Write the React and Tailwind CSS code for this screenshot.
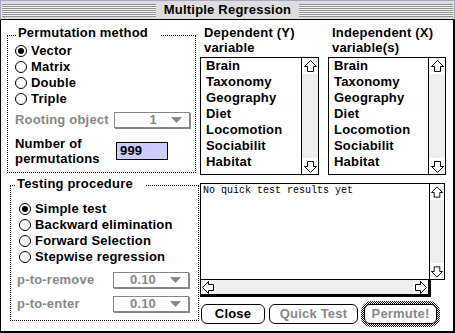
const ITEMS = ["Brain", "Taxonomy", "Geography", "Diet", "Locomotion", "Sociabilit", "Habitat"];

function Radio({ label, checked }) {
  return (
    <div className="flex items-center h-[16px] gap-[4px]">
      <span className="w-[12px] h-[12px] rounded-full border border-black bg-white flex items-center justify-center">
        {checked && <span className="w-[6px] h-[6px] rounded-full bg-black" />}
      </span>
      <span>{label}</span>
    </div>
  );
}

function Popup({ value }) {
  return (
    <div className="w-[76px] h-[16px] border border-[#888] shadow-[1px_1px_0_#888] bg-white flex items-center justify-end pr-[7px] text-[#888]">
      <span>{value}</span>
      <svg width="11" height="6" className="ml-[14px]">
        <polygon points="0,0 11,0 5.5,6" fill="#888" />
      </svg>
    </div>
  );
}

function Arrow({ dir }) {
  const rot = { up: 0, down: 180, left: 270, right: 90 }[dir];
  return (
    <svg width="15" height="15" viewBox="0 0 15 15" style={{ transform: `rotate(${rot}deg)` }}>
      <polygon
        points="7.5,1.5 13.5,7.5 10.5,7.5 10.5,12.5 4.5,12.5 4.5,7.5 1.5,7.5"
        fill="white"
        stroke="black"
        strokeWidth="1"
      />
    </svg>
  );
}

function VScroll({ width }) {
  return (
    <div className={`${width} border-l border-black bg-[#eeeeee] flex flex-col`}>
      <div className="h-[16px] bg-white flex items-center justify-center">
        <Arrow dir="up" />
      </div>
      <div className="flex-1" />
      <div className="h-[16px] bg-white flex items-center justify-center">
        <Arrow dir="down" />
      </div>
    </div>
  );
}

function ListBox({ width }) {
  return (
    <div className={`${width} h-[118px] border border-black flex`}>
      <div className="flex-1 pl-[5px] leading-[16px]">
        {ITEMS.map((it) => (
          <div key={it}>{it}</div>
        ))}
      </div>
      <VScroll width="w-[17px]" />
    </div>
  );
}

function Button({ children, disabled, width }) {
  return (
    <div
      className={`${width} h-[20px] rounded-[6px] border border-black bg-white flex items-center justify-center ${
        disabled ? "text-[#888]" : "text-black"
      }`}
    >
      {children}
    </div>
  );
}

function Stripes() {
  return (
    <div className="flex-1 h-[13px] bg-[repeating-linear-gradient(to_bottom,#909090_0px,#909090_1px,#f4f4f4_1px,#f4f4f4_2px)]" />
  );
}

export default function App() {
  return (
    <div
      className="w-[455px] h-[333px] bg-white flex flex-col text-[13px] font-bold text-black tracking-[0.2px]"
      style={{ fontFamily: '"Liberation Sans", Arial, sans-serif' }}
    >
      <div className="h-[20px] bg-[#dddddd] border-t border-x border-[#a8a8c0] border-b border-b-black flex items-center px-[1px]">
        <Stripes />
        <span className="px-[8px] leading-[16px]">Multiple Regression</span>
        <Stripes />
      </div>

      <div className="flex-1 flex border-l border-r-2 border-b-2 border-black">
        <div className="w-[199px] flex flex-col">
          <div className="relative ml-[6px] mt-[15px] w-[189px] h-[138px] border border-dotted border-black pl-[7px] pt-[7px] leading-[16px]">
            <span className="absolute left-[8px] top-[-11px] bg-white pl-[2px] pr-[12px]">Permutation method</span>
            <Radio label="Vector" checked />
            <Radio label="Matrix" />
            <Radio label="Double" />
            <Radio label="Triple" />
            <div className="mt-[5px] flex items-center h-[16px]">
              <span className="w-[99px] text-[#888]">Rooting object</span>
              <Popup value="1" />
            </div>
            <div className="mt-[8px] flex items-center">
              <div className="w-[101px] leading-[15px]">
                Number of
                <br />
                permutations
              </div>
              <div className="w-[52px] h-[18px] border border-black bg-[#ccccff] pl-[3px] leading-[16px]">999</div>
            </div>
          </div>

          <div className="relative ml-[9px] mt-[12px] w-[189px] h-[136px] border border-dotted border-black pt-[15px] leading-[16px]">
            <span className="absolute left-[4px] top-[-10px] bg-white pl-[2px] pr-[13px]">Testing procedure</span>
            <div className="pl-[8px]">
              <Radio label="Simple test" checked />
              <Radio label="Backward elimination" />
              <Radio label="Forward Selection" />
              <Radio label="Stepwise regression" />
            </div>
            <div className="pl-[6px] mt-[7px] flex items-center h-[16px]">
              <span className="w-[96px] text-[#888]">p-to-remove</span>
              <Popup value="0.10" />
            </div>
            <div className="pl-[6px] mt-[8px] flex items-center h-[16px]">
              <span className="w-[96px] text-[#888]">p-to-enter</span>
              <Popup value="0.10" />
            </div>
          </div>
        </div>

        <div className="flex-1 flex flex-col pt-[5px]">
          <div className="flex gap-[9px] leading-[15px]">
            <div className="w-[119px] pl-[4px]">
              Dependent (Y)
              <br />
              variable
            </div>
            <div className="w-[118px] pl-[4px]">
              Independent (X)
              <br />
              variable(s)
            </div>
          </div>
          <div className="mt-[2px] flex gap-[9px]">
            <ListBox width="w-[119px]" />
            <ListBox width="w-[118px]" />
          </div>

          <div className="mt-[8px] flex flex-col">
            <div className="w-[245px] h-[97px] border border-black flex">
              <div
                className="flex-1 pl-[2px] pt-[1px] text-[10px] leading-[12px] font-normal tracking-normal"
                style={{ fontFamily: '"Liberation Mono", "Courier New", monospace' }}
              >
                No quick test results yet
              </div>
              <VScroll width="w-[15px]" />
            </div>
            <div className="w-[231px] h-[17px] border-l border-r-[3px] border-b-[3px] border-black bg-[#eeeeee] flex">
              <div className="w-[15px] bg-white flex items-center justify-center">
                <Arrow dir="left" />
              </div>
              <div className="flex-1" />
              <div className="w-[15px] bg-white flex items-center justify-center">
                <Arrow dir="right" />
              </div>
            </div>
          </div>

          <div className="mt-[2px] h-[29px] flex items-center">
            <div className="ml-[1px]">
              <Button width="w-[64px]">Close</Button>
            </div>
            <div className="ml-[4px]">
              <Button width="w-[89px]" disabled>
                Quick Test
              </Button>
            </div>
            <div className="ml-[3px] p-[3px] rounded-[10px] bg-[repeating-conic-gradient(#000_0_25%,#fff_0_50%)] bg-[length:2px_2px]">
              <Button width="w-[73px]" disabled>
                Permute!
              </Button>
            </div>
          </div>
        </div>
      </div>
    </div>
  );
}
